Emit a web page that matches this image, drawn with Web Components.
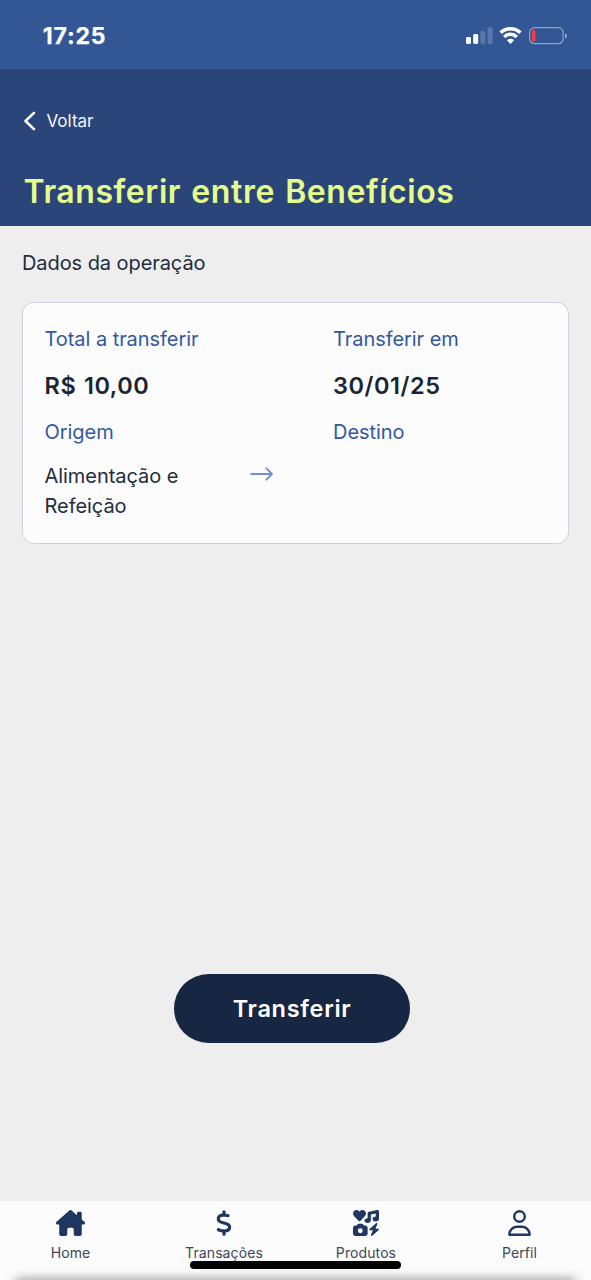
<!DOCTYPE html>
<html lang="pt-BR">
<head>
<meta charset="utf-8">
<title>Transferir entre Benefícios</title>
<style>
  html, body { margin: 0; height: 100%; }
  body { font-family: Inter, "Liberation Sans", sans-serif; background: #eeeeee; overflow: hidden; }
</style>
</head>
<body>
<app-screen>
  <status-bar slot="top" time="17:25"></status-bar>
  <page-header slot="top" back="Voltar">Transferir entre Benefícios</page-header>
  <operation-card>
    <labeled-value label="Total a transferir" strong>R$ 10,00</labeled-value>
    <labeled-value label="Transferir em" strong>30/01/25</labeled-value>
    <labeled-value label="Origem" arrow>Alimentação e Refeição</labeled-value>
    <labeled-value label="Destino"></labeled-value>
  </operation-card>
  <pill-button slot="action">Transferir</pill-button>
  <tab-bar slot="bottom">
    <tab-item icon="home">Home</tab-item>
    <tab-item icon="dollar">Transações</tab-item>
    <tab-item icon="icons">Produtos</tab-item>
    <tab-item icon="user">Perfil</tab-item>
  </tab-bar>
</app-screen>
<script>
const define = (name, render) => customElements.define(name, class extends HTMLElement {
  constructor() {
    super();
    this.attachShadow({ mode: 'open' });
  }
  connectedCallback() {
    const t = document.createElement('template');
    t.innerHTML = render(this);
    this.shadowRoot.replaceChildren(t.content.cloneNode(true));
  }
});

const ICONS = {
  home: ['0 0 576 512', 29, 'M543.8 287.6c17 0 32-14 32-32.1c1-9-3-17-11-24L512 185V64c0-17.7-14.3-32-32-32H448c-17.7 0-32 14.3-32 32v36.7L309.5 7c-6-5-14-7-21-7s-15 1-22 8L10 231.5c-7 7-10 15-10 24c0 18 14 32.1 32 32.1h32v69.7c-.1 .9-.1 1.8-.1 2.8V472c0 22.1 17.9 40 40 40h16c1.2 0 2.4-.1 3.6-.2c1.5 .1 3 .2 4.5 .2H160h24c22.1 0 40-17.9 40-40V448 384c0-17.7 14.3-32 32-32h64c17.7 0 32 14.3 32 32v64 24c0 22.1 17.9 40 40 40h24 32.5c1.4 0 2.8 0 4.2-.1c1.1 .1 2.2 .1 3.3 .1h16c22.1 0 40-17.9 40-40V455.8c.3-2.6 .5-5.3 .5-8.1l-.7-160.2h32z'],
  dollar: ['0 0 320 512', 16, 'M160 0c17.7 0 32 14.3 32 32V67.7c1.6 .2 3.1 .4 4.7 .7c.4 .1 .7 .1 1.1 .2l48 8.8c17.4 3.2 28.9 19.9 25.7 37.2s-19.9 28.9-37.2 25.7l-47.5-8.7c-31.3-4.6-58.9-1.5-78.3 6.2s-27.2 18.3-29 28.1c-2 10.7-.5 16.7 1.2 20.4c1.8 3.9 5.5 8.3 12.8 13.2c16.3 10.7 41.3 17.7 73.7 26.3l2.9 .8c28.6 7.6 63.6 16.8 89.6 33.8c14.2 9.3 27.6 21.9 35.9 39.5c8.5 17.9 10.3 37.9 6.4 59.2c-6.9 38-33.1 63.4-65.6 76.7c-13.7 5.6-28.6 9.2-44.4 11V480c0 17.7-14.3 32-32 32s-32-14.3-32-32V445.1c-.4-.1-.9-.1-1.3-.2l-.2 0 0 0c-24.4-3.8-64.5-14.3-91.5-26.3c-16.1-7.2-23.4-26.1-16.2-42.2s26.1-23.4 42.2-16.2c20.9 9.3 55.3 18.5 75.2 21.6c31.9 4.7 58.2 2 76-5.3c16.9-6.9 24.6-16.9 26.8-28.9c1.9-10.6 .4-16.7-1.3-20.4c-1.9-4-5.6-8.4-13-13.3c-16.4-10.7-41.5-17.7-74-26.3l-2.8-.7 0 0C119.4 279.3 84.4 270 58.4 253c-14.2-9.3-27.5-22-35.8-39.6c-8.4-17.9-10.1-37.9-6.1-59.2C23.7 116 52.3 91.2 84.8 78.3c13.3-5.3 27.9-8.9 43.2-11V32c0-17.7 14.3-32 32-32z'],
  icons: ['0 0 512 512', 26, 'M500.3 7.3C507.7 13.3 512 22.4 512 32v144c0 26.5-28.7 48-64 48s-64-21.5-64-48s28.7-48 64-48V71L352 90.2V208c0 26.5-28.7 48-64 48s-64-21.5-64-48s28.7-48 64-48V64c0-15.3 10.8-28.4 25.7-31.4l160-32c9.4-1.9 19.1 .6 26.6 6.6zM74.7 304l11.8-17.8c5.9-8.9 15.9-14.2 26.6-14.2h61.7c10.7 0 20.7 5.3 26.6 14.2L213.3 304H240c26.5 0 48 21.5 48 48V464c0 26.5-21.5 48-48 48H48c-26.5 0-48-21.5-48-48V352c0-26.5 21.5-48 48-48H74.7zM192 408a48 48 0 1 0 -96 0 48 48 0 1 0 96 0zM478.7 278.3L440.3 368H496c6.7 0 12.6 4.1 15 10.4s.6 13.3-4.4 17.7l-128 112c-5.6 4.9-13.9 5.3-19.9 .9s-8.2-12.4-5.3-19.2L391.7 400H336c-6.7 0-12.6-4.1-15-10.4s-.6-13.3 4.4-17.7l128-112c5.6-4.9 13.9-5.3 19.9-.9s8.2 12.4 5.3 19.2zm-339-59.2c-6.5 6.5-17 6.5-23 0L19.9 119.2c-28-29-26.5-76.9 5-103.9c27-23.5 68.4-19 93.4 6.5l10 10.5 9.5-10.5c25-25.5 65.9-30 93.9-6.5c31 27 32.5 74.9 4.5 103.9l-96.4 99.9z'],
  user: ['0 0 448 512', 23, 'M304 128a80 80 0 1 0 -160 0 80 80 0 1 0 160 0zM96 128a128 128 0 1 1 256 0A128 128 0 1 1 96 128zM49.3 464H398.7c-8.9-63.3-63.3-112-129-112H178.3c-65.7 0-120.1 48.7-129 112zM0 482.3C0 383.8 79.8 304 178.3 304h91.4C368.2 304 448 383.8 448 482.3c0 16.4-13.3 29.7-29.7 29.7H29.7C13.3 512 0 498.7 0 482.3z']
};

define('app-screen', () => `
  <style>
    :host { display: flex; flex-direction: column; height: 1280px; width: 591px; background: #eeeeee; }
    main { flex: 1; display: flex; flex-direction: column; }
    h2 { margin: 21px 22px 23px; font-weight: 400; font-size: 20px; line-height: 32px; letter-spacing: -0.07px; color: #222c3d; }
    .action { margin: auto 0 158px; display: flex; justify-content: center; padding-right: 7px; }
  </style>
  <slot name="top"></slot>
  <main>
    <h2>Dados da operação</h2>
    <slot></slot>
    <div class="action"><slot name="action"></slot></div>
  </main>
  <slot name="bottom"></slot>`);

define('status-bar', el => `
  <style>
    :host { display: flex; align-items: center; justify-content: space-between; box-sizing: border-box;
      height: 69px; padding: 3px 24px 0 42.8px; background: #335694; color: #fff; }
    .time { font-size: 23px; font-weight: 700; line-height: 30px; letter-spacing: 0.8px; -webkit-text-stroke: 0.25px #fff; }
    svg { display: block; }
  </style>
  <span class="time">${el.getAttribute('time')}</span>
  <svg width="101" height="20" viewBox="0 0 101 20" fill="#fff">
    <rect x="0" y="11" width="5" height="7" rx="1.4"/>
    <rect x="7.2" y="8" width="5" height="10" rx="1.4"/>
    <g fill-opacity=".2"><rect x="14.4" y="5" width="5" height="13" rx="1.4"/><rect x="21.6" y="1.3" width="5" height="16.7" rx="1.4"/></g>
    <g fill="none" stroke="#fff" stroke-width="3.5">
      <path d="M34.6 6.8A14.4 14.4 0 0 1 54.4 6.8"/>
      <path d="M38.2 10.9A9 9 0 0 1 50.8 10.9"/>
    </g>
    <path d="M44.5 18L40.9 14.3A5.2 5.2 0 0 1 48.1 14.3Z"/>
    <rect x="63.7" y="1.7" width="33.4" height="16" rx="4.8" fill="none" stroke="#fff" stroke-opacity=".45" stroke-width="1.2"/>
    <path d="M99 7.2c1.3.5 2 1.4 2 2.6s-.7 2.1-2 2.6z" fill-opacity=".5"/>
    <rect x="66" y="4" width="3.4" height="11.4" rx="1.4" fill="#fb3b3c"/>
  </svg>`);

define('page-header', el => `
  <style>
    :host { display: block; box-sizing: border-box; height: 157px; padding: 39px 23.5px 0; background: #2a457a; }
    .back { display: flex; align-items: center; gap: 11px; height: 26px; color: #f4f7fd; font-size: 17px; letter-spacing: 0; }
    .back svg { margin-top: -1px; }
    h1 { margin: 38px 0 0; font-size: 32px; line-height: 40px; font-weight: 600; letter-spacing: 0.57px; word-spacing: 1.6px; color: #e6fc8c; white-space: nowrap; }
  </style>
  <div class="back">
    <svg width="12" height="20" viewBox="0 0 12 20" fill="none" stroke="#fff" stroke-width="2.5" stroke-linecap="round" stroke-linejoin="round"><path d="M10 1.8L1.5 10L10 18.2"/></svg>
    <span>${el.getAttribute('back')}</span>
  </div>
  <h1><slot></slot></h1>`);

define('operation-card', () => `
  <style>
    :host { display: grid; grid-template-columns: 288.5px 1fr; align-content: start; row-gap: 16px; box-sizing: border-box;
      height: 242px; margin: 0 22px; padding: 21px 22px 21px 21.5px; background: #fcfcfd; border: 1px solid #cfd2da; border-radius: 12px; }
  </style>
  <slot></slot>`);

define('labeled-value', el => `
  <style>
    :host { display: block; font-size: 20px; line-height: 30px; color: #222c3d; letter-spacing: -0.05px; }
    .label { color: #3358a0; }
    .row { display: flex; margin-top: 14px; }
    .value { width: 160px; }
    .strong { font-size: 23.5px; font-weight: 600; letter-spacing: 0.55px; word-spacing: 1.3px; margin-top: 17px; color: #1b2434; }
    svg { margin: 5px 0 0 45px; }
  </style>
  <div class="label">${el.getAttribute('label')}</div>
  <div class="row ${el.hasAttribute('strong') ? 'strong' : ''}">
    <div class="value"><slot></slot></div>
    ${el.hasAttribute('arrow') ? '<svg width="24" height="16" viewBox="0 0 24 16" fill="none" stroke="#6b92cd" stroke-width="1.9" stroke-linecap="round" stroke-linejoin="round"><path d="M1.2 8H22M16.4 2.3L22 8L16.4 13.7"/></svg>' : ''}
  </div>`);

define('pill-button', () => `
  <style>
    :host { display: block; }
    button { all: unset; box-sizing: border-box; display: block; width: 236px; height: 69px; border-radius: 35px; background: #172643;
      color: #fff; font-size: 23.5px; font-weight: 600; line-height: 70px; letter-spacing: 0.7px; text-align: center; }
  </style>
  <button type="button"><slot></slot></button>`);

define('tab-bar', () => `
  <style>
    :host { display: grid; position: relative; grid-template-columns: 141px 166px 118px 166px; height: 79px; background: #fcfcfc; }
    .shade { position: absolute; left: 18px; right: 18px; bottom: -5px; height: 2px; box-shadow: 0 0 12px 2px rgba(0,0,0,.7); }
    .indicator { position: absolute; left: 190px; top: 60px; width: 211px; height: 7.5px; border-radius: 4px; background: #000; }
  </style>
  <slot></slot>
  <div class="shade"></div>
  <div class="indicator"></div>`);

define('tab-item', el => {
  const [box, width, path] = ICONS[el.getAttribute('icon')];
  return `
  <style>
    :host { display: flex; flex-direction: column; align-items: center; padding-top: 9px; color: #3c4657; font-size: 14px; line-height: 20px; letter-spacing: 0.1px; }
    :host(:last-child) { padding-left: 23px; }
    svg { display: block; fill: #20375f; margin-bottom: 7px; }
  </style>
  <svg width="${width}" height="26" viewBox="${box}">
    <path fill-rule="evenodd" d="${path}"/>
  </svg>
  <span><slot></slot></span>`;
});
</script>
</body>
</html>
